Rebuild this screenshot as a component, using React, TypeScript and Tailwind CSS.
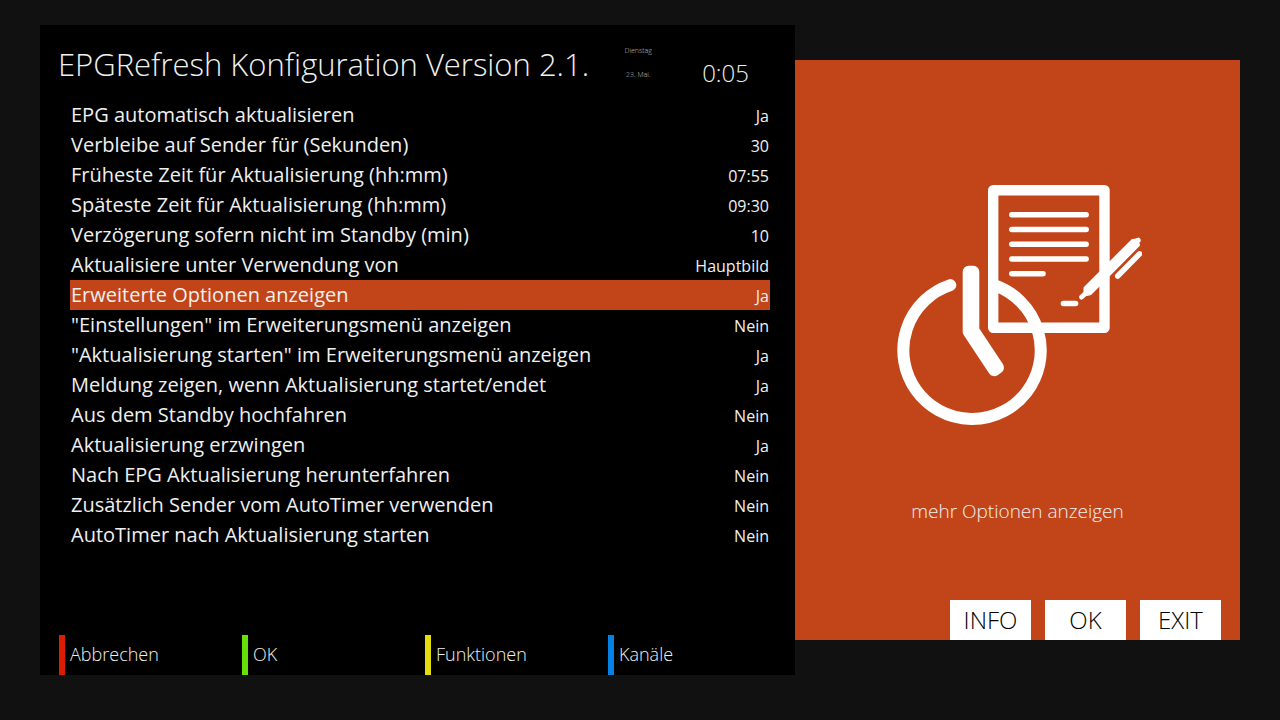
import React from "react";

const settings = [
  { label: "EPG automatisch aktualisieren", value: "Ja" },
  { label: "Verbleibe auf Sender für (Sekunden)", value: "30" },
  { label: "Früheste Zeit für Aktualisierung (hh:mm)", value: "07:55" },
  { label: "Späteste Zeit für Aktualisierung (hh:mm)", value: "09:30" },
  { label: "Verzögerung sofern nicht im Standby (min)", value: "10" },
  { label: "Aktualisiere unter Verwendung von", value: "Hauptbild" },
  { label: "Erweiterte Optionen anzeigen", value: "Ja", selected: true },
  { label: '"Einstellungen" im Erweiterungsmenü anzeigen', value: "Nein" },
  { label: '"Aktualisierung starten" im Erweiterungsmenü anzeigen', value: "Ja" },
  { label: "Meldung zeigen, wenn Aktualisierung startet/endet", value: "Ja" },
  { label: "Aus dem Standby hochfahren", value: "Nein" },
  { label: "Aktualisierung erzwingen", value: "Ja" },
  { label: "Nach EPG Aktualisierung herunterfahren", value: "Nein" },
  { label: "Zusätzlich Sender vom AutoTimer verwenden", value: "Nein" },
  { label: "AutoTimer nach Aktualisierung starten", value: "Nein" },
];

const colorKeys = [
  { label: "Abbrechen", border: "border-[#dd1c04]" },
  { label: "OK", border: "border-[#66e009]" },
  { label: "Funktionen", border: "border-[#e3dc0e]" },
  { label: "Kanäle", border: "border-[#0481e4]" },
];

const remoteKeys = ["INFO", "OK", "EXIT"];

const RefreshIcon = () => (
  <svg viewBox="0 0 245 240" className="w-[245px] h-[240px] ml-1" fill="none" stroke="white" strokeLinecap="round" strokeLinejoin="round" aria-hidden="true">
    {/* Clock */}
    <path d="M53.3 100.1 A68.7 68.7 0 1 0 98.5 100.7" strokeWidth="12" />
    <path d="M71.7 86.7 H76.3 V145.2 L101 182.6 L97.2 185.2 L71.7 146.6 Z" fill="white" strokeWidth="12" />
    {/* Sheet */}
    <rect x="96.2" y="5.2" width="111.3" height="137.6" strokeWidth="10.4" />
    <path d="M114.8 29.7 H189.2 M114.8 44.5 H189.2 M114.8 59.2 H189.2 M114.8 74 H189.2 M114.8 88.7 H146 M166.4 118.4 H178.6" strokeWidth="5.5" />
    {/* Pen */}
    <path d="M235.5 55.5 L240 55 L241.5 60 L193.5 108.5 L190 109.5 L188 107.5 L188 103 Z" fill="white" strokeWidth="3" />
    <path d="M240.5 55.5 L241.2 55.2 M184.6 112 L190 107" strokeWidth="5" />
    <path d="M220.7 91 L242.6 68.8" strokeWidth="5.5" />
  </svg>
);

export default function App() {
  return (
    <div className="min-h-screen bg-[#111111] px-10 pt-[25px] pb-[45px] grid grid-cols-[minmax(0,151fr)_minmax(0,89fr)] font-['Open_Sans',sans-serif] text-[#f0f0f0]">
      <main className="bg-black flex flex-col">
        <header className="h-[75px] pl-[18px] pr-6 flex items-start justify-between">
          <h1 className="mt-4 text-[31px] leading-[46px] font-light whitespace-nowrap">
            EPGRefresh Konfiguration Version 2.1.
          </h1>
          <div className="flex pr-[22px]">
            <div className="mt-3.5 w-10 text-center text-[7px] leading-6 font-light text-[#c0c0c0]">
              <p>Dienstag</p>
              <p>23. Mai.</p>
            </div>
            <time className="mt-8 ml-11 text-2xl font-light">0:05</time>
          </div>
        </header>
        <div className="pl-[30px] pr-[25px]">
          <table className="w-full">
            <tbody>
              {settings.map(item => <tr key={item.label} className={item.selected ? "bg-[#c2451a]" : ""}>
                  <th scope="row" className="h-[30px] p-0 pl-px text-left text-xl leading-[30px] font-normal">
                    {item.label}
                  </th>
                  <td className="h-[30px] p-0 pr-px text-right align-bottom text-base leading-7">{item.value}</td>
                </tr>)}
            </tbody>
          </table>
        </div>
        <footer className="mt-auto pl-[19px] pr-1 grid grid-cols-4">
          {colorKeys.map(item => <button key={item.label} type="button" className={`h-10 border-l-6 pl-[5px] pb-0.5 text-left text-lg font-light ${item.border}`}>
              {item.label}
            </button>)}
        </footer>
      </main>
      <aside className="my-[35px] bg-[#c2451a] flex flex-col">
        <div className="pt-[125px] flex flex-col items-center">
          <RefreshIcon />
          <p className="mt-[71px] text-[19px] leading-[30px] font-light">mehr Optionen anzeigen</p>
        </div>
        <div className="mt-auto pr-[19px] flex justify-end gap-[14px]">
          {remoteKeys.map(key => <button key={key} type="button" className="w-[81px] h-10 bg-white text-black text-2xl font-light">
              {key}
            </button>)}
        </div>
      </aside>
    </div>
  );
}
